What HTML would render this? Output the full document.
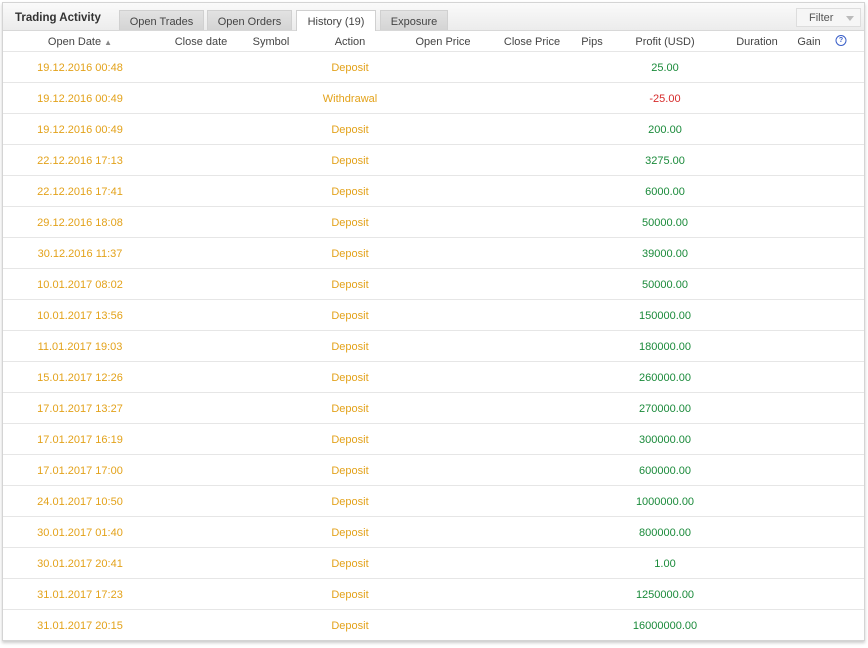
<!DOCTYPE html>
<html><head><meta charset="utf-8"><style>
body{margin:0;width:868px;height:648px;background:#fff;font-family:"Liberation Sans",sans-serif;font-size:11px;position:relative;overflow:hidden}
.panel{position:absolute;left:2px;top:2px;width:861px;height:637px;border:1px solid #d4d4d4;box-shadow:0 2px 3px #ccc;background:#fff}
.hdr{position:absolute;left:0;top:0;width:861px;height:27px;background:linear-gradient(#fafafa,#ececec);border-bottom:1px solid #d8d8d8}
.title{position:absolute;left:12px;top:9px;font-weight:bold;font-size:11.5px;color:#333}
.tab{position:absolute;top:7px;height:20px;background:linear-gradient(#e2e2e2,#d4d4d4);border:1px solid #d0d0d0;border-bottom:none;color:#444;font-size:11px;text-align:center;line-height:22px;box-sizing:border-box}
.tab.act{background:#fff;height:21px}
.filter{position:absolute;left:793px;top:5px;width:65px;height:19px;border:1px solid #ddd;background:#f6f6f6;box-sizing:border-box;font-size:11px;color:#555;line-height:18px;padding-left:12px}
.filter:after{content:"";position:absolute;right:6px;top:7px;border:4px solid transparent;border-top:5px solid #bbb}
.c{position:absolute;transform:translateX(-50%);white-space:nowrap}
.row{position:absolute;left:0;width:861px;height:31px;border-bottom:1px solid #e6e6e6;box-sizing:border-box}
.row .c{top:10px}
.o{color:#e3a21a}.g{color:#1a8a3a}.r{color:#d62b2b}
.th{color:#444}
</style></head><body>
<div class="panel">
<div class="hdr">
<div class="title">Trading Activity</div>
<div class="tab" style="left:116px;width:85px">Open Trades</div>
<div class="tab" style="left:204px;width:85px">Open Orders</div>
<div class="tab act" style="left:293px;width:80px">History (19)</div>
<div class="tab" style="left:377px;width:68px">Exposure</div>
<div class="filter">Filter</div>
</div>
<div class="row th" style="top:28px;height:21px">
<span class="c" style="left:77px;top:5px">Open Date <span style="font-size:8px;color:#888">▲</span></span>
<span class="c" style="left:198px;top:5px">Close date</span>
<span class="c" style="left:268px;top:5px">Symbol</span>
<span class="c" style="left:347px;top:5px">Action</span>
<span class="c" style="left:440px;top:5px">Open Price</span>
<span class="c" style="left:529px;top:5px">Close Price</span>
<span class="c" style="left:589px;top:5px">Pips</span>
<span class="c" style="left:662px;top:5px">Profit (USD)</span>
<span class="c" style="left:754px;top:5px">Duration</span>
<span class="c" style="left:806px;top:5px">Gain</span>
<span class="c" style="left:838px;top:4px;width:9px;height:9px;border:1px solid #3a5fc8;border-radius:50%;font-size:7px;line-height:9px;text-align:center;color:#3a5fc8;font-weight:bold">?</span>
</div>
<div id="rows"></div>
</div>
<script>
var d=[["19.12.2016 00:48","Deposit","25.00"],["19.12.2016 00:49","Withdrawal","-25.00"],["19.12.2016 00:49","Deposit","200.00"],["22.12.2016 17:13","Deposit","3275.00"],["22.12.2016 17:41","Deposit","6000.00"],["29.12.2016 18:08","Deposit","50000.00"],["30.12.2016 11:37","Deposit","39000.00"],["10.01.2017 08:02","Deposit","50000.00"],["10.01.2017 13:56","Deposit","150000.00"],["11.01.2017 19:03","Deposit","180000.00"],["15.01.2017 12:26","Deposit","260000.00"],["17.01.2017 13:27","Deposit","270000.00"],["17.01.2017 16:19","Deposit","300000.00"],["17.01.2017 17:00","Deposit","600000.00"],["24.01.2017 10:50","Deposit","1000000.00"],["30.01.2017 01:40","Deposit","800000.00"],["30.01.2017 20:41","Deposit","1.00"],["31.01.2017 17:23","Deposit","1250000.00"],["31.01.2017 20:15","Deposit","16000000.00"]];
var h="";d.forEach(function(r,i){var t=49+i*31;h+='<div class="row" style="top:'+t+'px'+(i==18?';border-bottom:none':'')+'"><span class="c o" style="left:77px">'+r[0]+'</span><span class="c o" style="left:347px">'+r[1]+'</span><span class="c '+(r[2][0]=="-"?"r":"g")+'" style="left:662px">'+r[2]+'</span></div>';});
document.getElementById("rows").outerHTML=h;
</script>
</body></html>
